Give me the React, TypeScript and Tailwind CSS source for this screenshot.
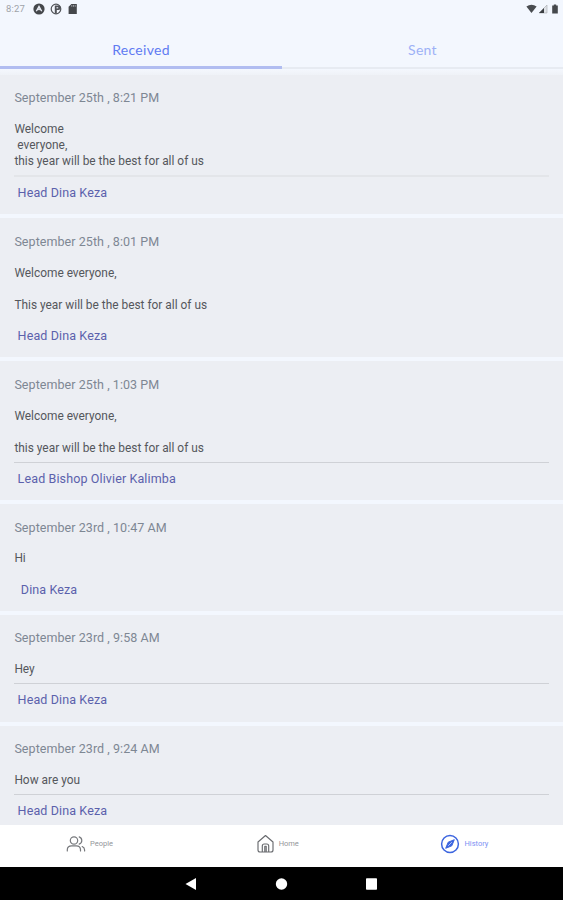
type Message = {
  date: string;
  body: string;
  author: string;
  divider: 'none' | 'soft' | 'line';
};

const messages: Message[] = [
  { date: 'September 25th , 8:21 PM', body: 'Welcome\n everyone,\nthis year will be the best for all of us', author: ' Head Dina Keza', divider: 'soft' },
  { date: 'September 25th , 8:01 PM', body: 'Welcome everyone,\n\nThis year will be the best for all of us', author: ' Head Dina Keza', divider: 'none' },
  { date: 'September 25th , 1:03 PM', body: 'Welcome everyone,\n\nthis year will be the best for all of us', author: ' Lead Bishop Olivier Kalimba', divider: 'line' },
  { date: 'September 23rd , 10:47 AM', body: 'Hi', author: '  Dina Keza', divider: 'none' },
  { date: 'September 23rd , 9:58 AM', body: 'Hey', author: ' Head Dina Keza', divider: 'line' },
  { date: 'September 23rd , 9:24 AM', body: 'How are you', author: ' Head Dina Keza', divider: 'line' },
];

const dividerStyles = {
  none: 'h-px bg-transparent',
  soft: 'h-[2px] -mt-px bg-[#e3e5e9]',
  line: 'h-px bg-[#cfd1d6]',
};

function StatusBar() {
  return (
    <div className="flex h-[18px] items-center justify-between pl-[6px] pr-[4px]">
      <div className="flex items-center">
        <span className="w-[27px] text-[9.5px] leading-[18px] tracking-[0.2px] text-[#a0a3a9]">8:27</span>
        <svg className="h-3 w-3" viewBox="0 0 12 12">
          <circle cx="6" cy="6" r="5.6" fill="#44474b" />
          <path d="M3.2 8.3 6 3.2l2.8 5.1M4.6 7.2 6 5.8l1.4 1.4" fill="none" stroke="#e9edf5" strokeWidth="1.1" />
        </svg>
        <svg className="ml-[5px] h-3 w-3" viewBox="0 0 12 12">
          <circle cx="6" cy="6" r="4.8" fill="#f4f7fd" stroke="#505358" strokeWidth="1.2" />
          <path d="M4.8 2.6h3.7a2.2 2.2 0 0 1 0 4.4H6.8v3.6H4.8z" fill="#505358" />
          <path d="M6.5 4.2h1.7v1.2H6.5z" fill="#e9edf5" />
        </svg>
        <svg className="ml-[5px] h-3 w-3" viewBox="0 0 12 12">
          <path d="M4.4 1h5.4v10H1.6V3.8z" fill="#44474b" />
          <path d="M4.8 2v1.8M6.5 2v1.8M8.2 2v1.8" stroke="#bfc2c8" strokeWidth=".7" />
        </svg>
      </div>
      <div className="flex items-center">
        <svg className="h-[10px] w-[11px]" viewBox="0 0 11 10">
          <path d="M.4 2.6Q5.5-1 10.6 2.6L5.5 9z" fill="#494c50" />
        </svg>
        <svg className="ml-px h-[10px] w-[10px]" viewBox="0 0 10 10">
          <path d="M9 1v8H1z" fill="#dfe2e7" stroke="#a5a8ad" strokeWidth=".6" />
          <path d="M6 4v5H1z" fill="#3b3e42" />
        </svg>
        <svg className="ml-[3px] h-[10px] w-[8px]" viewBox="0 0 8 10">
          <path d="M1.2 1.4h1.6V.4h2.4v1h1.6v8.2H1.2z" fill="#45484c" />
        </svg>
      </div>
    </div>
  );
}

function Tabs() {
  return (
    <div className="flex h-[52px] font-[Lato,sans-serif] text-[14px] font-normal">
      <div className="flex w-[282px] flex-col justify-between text-center text-[#5f7bf2]">
        <span className="pt-[22px] leading-5 tracking-[0.3px]">Received</span>
        <span className="mb-px h-[3px] bg-[#b1bdf1]" />
      </div>
      <div className="flex flex-1 flex-col justify-between text-center text-[#9db1f6]">
        <span className="pt-[22px] leading-5 tracking-[0.3px]">Sent</span>
        <span className="mb-px h-[2px] bg-[#e7ebf2]" />
      </div>
    </div>
  );
}

function Card({ message }: { message: Message }) {
  return (
    <article className="shrink-0 bg-[#eceef3] pt-[15.6px] pr-[14px] pb-[13.3px] pl-[14.4px]">
      <p className="text-[12.5px] leading-4 tracking-[0.06px] text-[#7e8793]">{message.date}</p>
      <p className="mt-[14.7px] whitespace-pre text-[11.9px] leading-[16.1px] text-[#55575c]">{message.body}</p>
      <div className={`mt-[6px] ${dividerStyles[message.divider]}`} />
      <p className="mt-[8px] whitespace-pre text-[12.5px] leading-4 tracking-[0.12px] text-[#5b61ac]">{message.author}</p>
    </article>
  );
}

function BottomNav() {
  return (
    <nav className="grid h-[42px] shrink-0 grid-cols-3 bg-white pb-[4px] text-[7.5px] text-[#94969a]">
      <div className="flex items-center justify-center pr-[8.5px]">
        <svg className="mr-[4px] h-[18px] w-[20px]" viewBox="0 0 20 18" fill="none" stroke="#77797d" strokeWidth="1.2" strokeLinecap="round">
          <circle cx="8" cy="5.5" r="3.7" />
          <path d="M1.3 16v-1.2c0-2.5 2-4 4.3-4h4.7c2.4 0 4.2 1.5 4.2 4V16M13.2 1.9a3.8 3.8 0 0 1 0 7.2M16.2 11.5c1.5.6 2.4 1.8 2.4 3.5v1" />
        </svg>
        <span>People</span>
      </div>
      <div className="flex items-center justify-center pr-[7px]">
        <svg className="mr-[4.5px] h-[20px] w-[17px]" viewBox="0 0 17 20" fill="none" stroke="#696b6f" strokeWidth="1.15" strokeLinejoin="round">
          <path d="M1 8 8.5 1.5 16 8v8q0 2-2 2H3q-2 0-2-2z" />
          <path d="M5.3 18v-6q0-2 2-2h2.4q2 0 2 2v6M7.8 18v-5.8h1.4V18" />
        </svg>
        <span>Home</span>
      </div>
      <div className="flex items-center justify-center pr-[9.5px] text-[#7e91f3]">
        <svg className="mr-[4px] h-[20px] w-[20px]" viewBox="0 0 20 20">
          <circle cx="10" cy="10" r="8.4" fill="none" stroke="#3c65df" strokeWidth="1.5" />
          <path d="m14.3 5.7-2.5 6.1-6.1 2.5 2.5-6.1z" fill="#3c65df" stroke="#3c65df" strokeLinejoin="round" />
          <path d="m8.2 11.8 3.6-3.6" stroke="#d8e2ff" strokeWidth=".8" />
        </svg>
        <span>History</span>
      </div>
    </nav>
  );
}

function SystemNav() {
  return (
    <div className="flex h-[33px] shrink-0 items-center justify-center bg-black pr-[2px]">
      <svg className="h-[14px] w-[192px]" viewBox="0 0 192 14" fill="white">
        <path d="M.5 7 11 1v12z" />
        <circle cx="96.5" cy="7" r="5.7" />
        <rect x="181" y="1.3" width="11" height="11.5" rx=".8" />
      </svg>
    </div>
  );
}

export default function App() {
  return (
    <main className="flex h-[900px] w-full flex-col overflow-hidden bg-[#f3f7fe] font-[Roboto,sans-serif]">
      <header className="shrink-0">
        <StatusBar />
        <Tabs />
      </header>
      <div className="h-[4.6px] shrink-0 bg-gradient-to-b from-[#f3f6fc] to-[#eff2f7]" />
      <section className="flex min-h-0 flex-1 flex-col gap-[4px] overflow-hidden">
        {messages.map((message) => <Card key={message.date} message={message} />)}
      </section>
      <BottomNav />
      <SystemNav />
    </main>
  );
}
